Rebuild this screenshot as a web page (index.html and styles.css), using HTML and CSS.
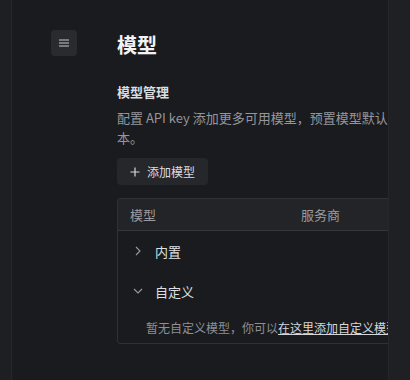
FILE: index.html
```html
<!DOCTYPE html>
<html lang="zh">
<head>
<meta charset="utf-8">
<link rel="stylesheet" href="styles.css">
</head>
<body>
<div class="app">
  <aside class="rail"></aside>
  <main class="main">
    <button class="menu-btn" aria-label="menu">
      <svg width="12" height="10" viewBox="0 0 12 10"><path d="M1 2h10M1 5h10M1 8h10" stroke="#c8c9cc" stroke-width="1.2" fill="none"/></svg>
    </button>
    <section class="content">
      <h1 class="title">模型</h1>
      <h2 class="subtitle">模型管理</h2>
      <p class="desc">配置 API key 添加更多可用模型，预置模型默认本。</p>
      <button class="add-btn">
        <svg width="10" height="10" viewBox="0 0 10 10"><path d="M5 0.5v9M0.5 5h9" stroke="#d8d9dc" stroke-width="1.2" fill="none"/></svg>
        <span>添加模型</span>
      </button>
      <div class="table">
        <div class="thead">
          <span class="col-model">模型</span>
          <span class="col-provider">服务商</span>
        </div>
        <div class="group">
          <svg class="chev" width="10" height="10" viewBox="0 0 10 10"><path d="M3 1l4 4-4 4" stroke="#9a9ba0" stroke-width="1.1" fill="none"/></svg>
          <span>内置</span>
        </div>
        <div class="group">
          <svg class="chev" width="10" height="10" viewBox="0 0 10 10"><path d="M1 3l4 4 4-4" stroke="#9a9ba0" stroke-width="1.1" fill="none"/></svg>
          <span>自定义</span>
        </div>
        <div class="empty">暂无自定义模型，你可以<a href="#">在这里添加自定义模型</a></div>
      </div>
    </section>
  </main>
  <aside class="side"></aside>
</div>
</body>
</html>
```
FILE: styles.css
```css
* { box-sizing: border-box; }
html, body { margin: 0; padding: 0; }
body {
  width: 410px;
  height: 380px;
  background: #1b1c1f;
  font-family: "Noto Sans CJK SC", "Noto Sans", sans-serif;
  color: #e4e5e7;
  overflow: hidden;
}
.app {
  display: flex;
  height: 380px;
}
.rail {
  width: 12px;
  flex: none;
  background: #1e1f22;
  border-right: 1px solid #26272a;
}
.main {
  flex: 1;
  min-width: 0;
  display: flex;
  align-items: flex-start;
  padding: 30px 0 0 39px;
  overflow: hidden;
  background: #1a1b1e;
}
.side {
  width: 22px;
  flex: none;
  background: #1f2023;
  border-left: 1px solid #25262a;
}
.menu-btn {
  width: 26px;
  height: 26px;
  flex: none;
  border: none;
  border-radius: 4px;
  background: #2a2b2f;
  display: flex;
  align-items: center;
  justify-content: center;
  padding: 0;
  margin-right: 40px;
}
.content {
  width: 276px;
  flex: none;
}
.title {
  margin: 1px 0 0;
  font-size: 20px;
  line-height: 28px;
  font-weight: 700;
  color: #f2f3f5;
}
.subtitle {
  margin: 23px 0 0;
  font-size: 13px;
  line-height: 20px;
  font-weight: 700;
  color: #dcdde0;
}
.desc {
  margin: 6px 0 0;
  font-size: 13px;
  line-height: 20px;
  color: #95969b;
}
.add-btn {
  margin-top: 10px;
  height: 27px;
  padding: 0 13px;
  border: none;
  border-radius: 4px;
  background: #26272b;
  color: #dcdde0;
  font-family: inherit;
  font-size: 12px;
  display: flex;
  align-items: center;
  gap: 7px;
}
.table {
  margin-top: 13px;
  width: 330px;
  border: 1px solid #303135;
  border-radius: 3px;
}
.thead {
  height: 32px;
  background: #232427;
  border-bottom: 1px solid #36373b;
  display: flex;
  align-items: center;
  font-size: 13px;
  color: #9a9ba0;
  padding-left: 12px;
}
.col-model { width: 171px; }
.group {
  height: 40px;
  display: flex;
  align-items: center;
  padding-left: 15px;
  gap: 12px;
  font-size: 13px;
  color: #dfe0e3;
}
.empty {
  height: 32px;
  padding-left: 28px;
  display: flex;
  align-items: center;
  font-size: 12px;
  color: #8e8f94;
  white-space: nowrap;
}
.empty a {
  color: #d6d7da;
  text-decoration: underline;
}
```
